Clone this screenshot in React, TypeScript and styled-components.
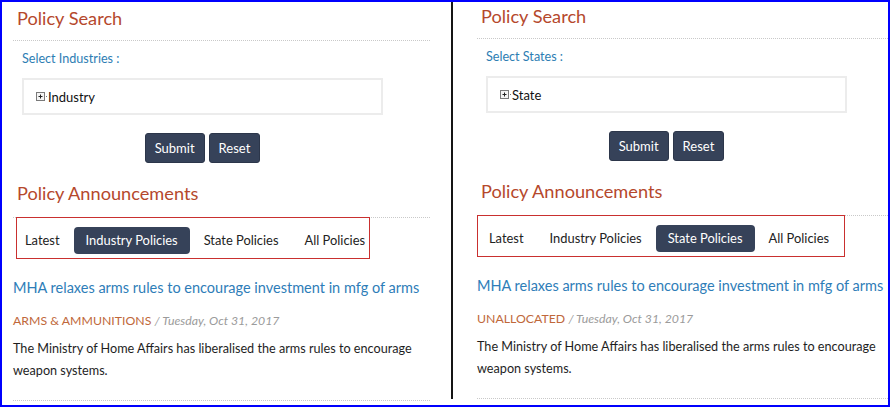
import React from 'react';
import styled, { createGlobalStyle } from 'styled-components';

const GlobalStyle = createGlobalStyle`
  html, body { margin: 0; padding: 0; background: #fff; }
  body { font-family: Lato, "Open Sans", sans-serif; }
  * { box-sizing: border-box; }
`;

const Frame = styled.div`
  width: 890px;
  height: 407px;
  border: 2px solid #0000fe;
  display: flex;
  overflow: hidden;
  background: #fff;
`;

const Panel = styled.div<{ $w: number; $pt: number; $pl: number }>`
  width: ${(p) => p.$w}px;
  flex: none;
  padding: ${(p) => p.$pt}px 0 0 ${(p) => p.$pl}px;
  overflow: hidden;
`;

const Divider = styled.div`
  width: 2px;
  height: 397px;
  flex: none;
  background: #151515;
`;

const Content = styled.div`
  width: 417px;
  flex: none;
  display: flex;
  flex-direction: column;
`;

const Heading = styled.h2<{ $pb: number; $mt: number }>`
  margin: ${(p) => p.$mt}px 0 0 0;
  padding: 0 0 ${(p) => p.$pb}px 4px;
  font-size: 18.2px;
  line-height: 24px;
  font-weight: 400;
  color: #b5482c;
  border-bottom: 1px dotted #c9c9c9;
`;

const Label = styled.div`
  margin: 9px 0 0 9px;
  font-size: 12.6px;
  line-height: 18px;
  color: #2d7db3;
`;

const TreeBox = styled.div`
  margin: 10px 0 0 9px;
  width: 361px;
  height: 37px;
  border: 2px solid #ececec;
  display: flex;
  align-items: center;
  padding-left: 12px;
  font-size: 13px;
  color: #111;
`;

const TreeIcon = styled.svg`
  width: 12px;
  height: 9px;
  flex: none;
`;

const ButtonRow = styled.div`
  margin: 18px 0 0 9px;
  width: 361px;
  display: flex;
  justify-content: center;
  gap: 4px;
`;

const Button = styled.button`
  height: 30px;
  padding: 0 9px;
  border: 1px solid #2c364a;
  border-radius: 3px;
  background: #364259;
  color: #fff;
  font-family: Lato, "Open Sans", sans-serif;
  font-size: 13px;
  line-height: 28px;
`;

const TabBar = styled.div`
  position: relative;
  margin-top: -1px;
  height: 42px;
  display: flex;
  align-items: flex-start;
  gap: 2px;
  padding-top: 10px;
`;

const Tab = styled.div<{ $active?: boolean }>`
  height: 27px;
  padding: 0 12px;
  border-radius: 4px;
  font-size: 12.9px;
  line-height: 27px;
  white-space: nowrap;
  color: ${(p) => (p.$active ? '#fff' : '#222')};
  background: ${(p) => (p.$active ? '#364259' : 'transparent')};
`;

const Annotation = styled.div<{ $left: number; $w: number }>`
  position: absolute;
  top: 0;
  left: ${(p) => p.$left}px;
  width: ${(p) => p.$w}px;
  height: 42px;
  border: 1px solid #c9302f;
  pointer-events: none;
`;

const Title = styled.a`
  margin-top: 19px;
  font-size: 14.5px;
  line-height: 20px;
  color: #2e7db8;
  text-decoration: none;
  white-space: nowrap;
`;

const Meta = styled.div`
  margin-top: 15px;
  font-size: 12.3px;
  line-height: 16px;
  white-space: nowrap;
`;

const Category = styled.span`
  color: #c0683a;
`;

const DateText = styled.span`
  color: #9b9b9b;
  font-style: italic;
`;

const Para = styled.p`
  margin: 9px 0 0 0;
  font-size: 12.65px;
  line-height: 22px;
  color: #1e1e1e;
`;

const BottomRule = styled.div`
  margin-top: 18px;
  border-bottom: 1px dotted #c9c9c9;
`;

type PageProps = {
  w: number;
  pt: number;
  pl: number;
  label: string;
  tree: string;
  active: number;
  category: string;
  frameLeft: number;
  frameW: number;
};

const TABS = ['Latest', 'Industry Policies', 'State Policies', 'All Policies'];

function PolicyPage(p: PageProps) {
  return (
    <Panel $w={p.w} $pt={p.pt} $pl={p.pl}>
      <Content>
        <Heading $mt={0} $pb={10}>Policy Search</Heading>
        <Label>{p.label}</Label>
        <TreeBox>
          <TreeIcon viewBox="0 0 12 9">
            <rect x="0.5" y="0.5" width="8" height="8" fill="#f4f4f4" stroke="#7a7a7a" />
            <path d="M2.5 4.5h4M4.5 2.5v4" stroke="#222" strokeWidth="1" />
            <rect x="10" y="4" width="1" height="1" fill="#777" />
          </TreeIcon>
          <span>{p.tree}</span>
        </TreeBox>
        <ButtonRow>
          <Button>Submit</Button>
          <Button>Reset</Button>
        </ButtonRow>
        <Heading $mt={18} $pb={12}>Policy Announcements</Heading>
        <TabBar>
          {TABS.map((t, i) => (
            <Tab key={t} $active={i === p.active}>
              {t}
            </Tab>
          ))}
          <Annotation $left={p.frameLeft} $w={p.frameW} />
        </TabBar>
        <Title href="#">MHA relaxes arms rules to encourage investment in mfg of arms</Title>
        <Meta>
          <Category>{p.category}</Category> <DateText>/ Tuesday, Oct 31, 2017</DateText>
        </Meta>
        <Para>
          The Ministry of Home Affairs has liberalised the arms rules to encourage weapon systems.
        </Para>
        <BottomRule />
      </Content>
    </Panel>
  );
}

export default function App() {
  return (
    <>
      <GlobalStyle />
      <Frame>
        <PolicyPage
          w={449}
          pt={4}
          pl={11}
          label="Select Industries :"
          tree="Industry"
          active={1}
          category="ARMS & AMMUNITIONS"
          frameLeft={3}
          frameW={354}
        />
        <Divider />
        <PolicyPage
          w={435}
          pt={2}
          pl={24}
          label="Select States :"
          tree="State"
          active={2}
          category="UNALLOCATED"
          frameLeft={0}
          frameW={368}
        />
      </Frame>
    </>
  );
}
